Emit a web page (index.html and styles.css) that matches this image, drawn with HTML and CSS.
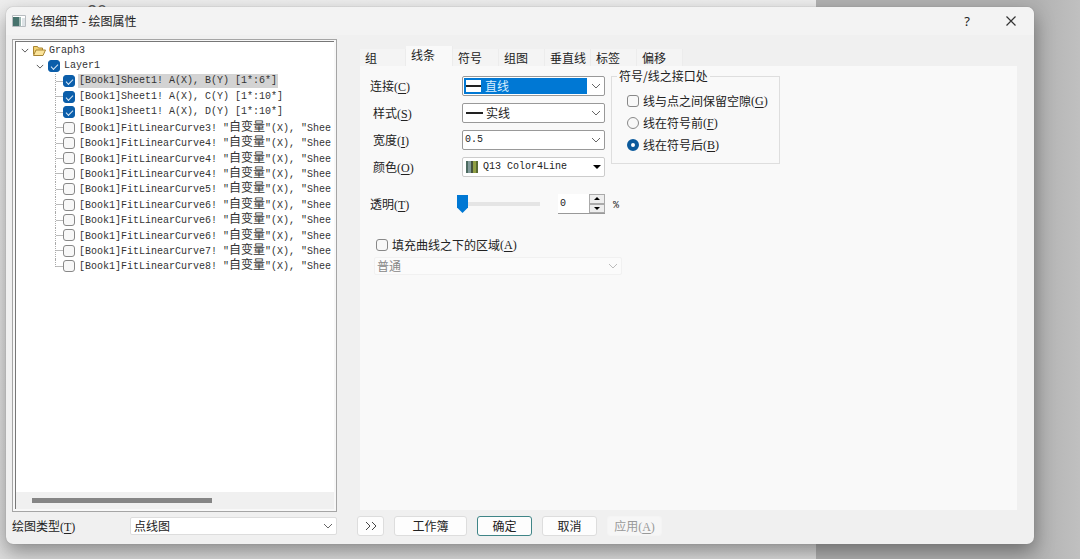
FILE: index.html
```
<!DOCTYPE html>
<html lang="zh-CN">
<head>
<meta charset="utf-8">
<title>绘图细节 - 绘图属性</title>
<link rel="stylesheet" href="styles.css">
</head>
<body>
<svg class="defs" width="0" height="0" aria-hidden="true">
  <symbol id="chev" viewBox="0 0 10 6"><path d="M1 1l4 4 4-4" fill="none" stroke="currentColor"/></symbol>
  <symbol id="up" viewBox="0 0 8 4"><path d="M0 4l4-4 4 4z" fill="currentColor"/></symbol>
  <symbol id="down" viewBox="0 0 8 4"><path d="M0 0l4 4 4-4z" fill="currentColor"/></symbol>
</svg>
<div class="backdrop" aria-hidden="true"><div class="page"><span>20</span></div></div>
<main class="dialog">
  <header class="titlebar">
    <svg width="14" height="12" viewBox="0 0 14 12"><path fill="#fff" stroke="#b8bcc0" d="M.5.5h13v11H.5z"/><path fill="#47736d" d="M1 2h6v9H1z"/><path fill="#9bb5b0" d="M7 2h2v9H7z"/><path fill="#dde3e6" d="M10 3h3v8h-3z"/></svg>
    <h1>绘图细节 - 绘图属性</h1>
    <button class="tb" aria-label="帮助">?</button>
    <button class="tb" aria-label="关闭"><svg width="10" height="10" viewBox="0 0 10 10"><path d="M.5.5l9 9M9.500.5l-9 9" stroke="#333" fill="none" stroke-width="1.2"/></svg></button>
  </header>
  <div class="body">
    <section class="tree">
      <div class="view">
        <ul class="rows">
          <li class="root"><svg class="arrow" width="8" height="5"><use href="#chev"/></svg><svg width="13" height="11" viewBox="0 0 13 11"><path d="M.5 9.500V1.500h4l1 1.500h4v2" fill="#f3d271" stroke="#a88432"/><path d="M.5 10.500L3 5h9.500l-2.500 5.500z" fill="#fbe49b" stroke="#a88432"/></svg><span class="l">Graph3</span></li>
          <li class="layer"><svg class="arrow" width="8" height="5"><use href="#chev"/></svg><label><input type="checkbox" checked><span class="l">Layer1</span></label></li>
          <li class="leaf"><label><input type="checkbox" checked><span class="l picked">[Book1]Sheet1! A(X), B(Y) [1*:6*]</span></label></li>
          <li class="leaf"><label><input type="checkbox" checked><span class="l">[Book1]Sheet1! A(X), C(Y) [1*:10*]</span></label></li>
          <li class="leaf"><label><input type="checkbox" checked><span class="l">[Book1]Sheet1! A(X), D(Y) [1*:10*]</span></label></li>
          <li class="leaf"><label><input type="checkbox"><span class="l">[Book1]FitLinearCurve3! "<b>自变量</b>"(X), "Shee</span></label></li>
          <li class="leaf"><label><input type="checkbox"><span class="l">[Book1]FitLinearCurve4! "<b>自变量</b>"(X), "Shee</span></label></li>
          <li class="leaf"><label><input type="checkbox"><span class="l">[Book1]FitLinearCurve4! "<b>自变量</b>"(X), "Shee</span></label></li>
          <li class="leaf"><label><input type="checkbox"><span class="l">[Book1]FitLinearCurve4! "<b>自变量</b>"(X), "Shee</span></label></li>
          <li class="leaf"><label><input type="checkbox"><span class="l">[Book1]FitLinearCurve5! "<b>自变量</b>"(X), "Shee</span></label></li>
          <li class="leaf"><label><input type="checkbox"><span class="l">[Book1]FitLinearCurve6! "<b>自变量</b>"(X), "Shee</span></label></li>
          <li class="leaf"><label><input type="checkbox"><span class="l">[Book1]FitLinearCurve6! "<b>自变量</b>"(X), "Shee</span></label></li>
          <li class="leaf"><label><input type="checkbox"><span class="l">[Book1]FitLinearCurve6! "<b>自变量</b>"(X), "Shee</span></label></li>
          <li class="leaf"><label><input type="checkbox"><span class="l">[Book1]FitLinearCurve7! "<b>自变量</b>"(X), "Shee</span></label></li>
          <li class="leaf"><label><input type="checkbox"><span class="l">[Book1]FitLinearCurve8! "<b>自变量</b>"(X), "Shee</span></label></li>
        </ul>
        <div class="scroll"><div class="thumb"></div></div>
      </div>
    </section>
    <section class="props">
      <nav class="tabs">
        <button>组</button><button class="on">线条</button><button>符号</button><button>组图</button><button>垂直线</button><button>标签</button><button>偏移</button>
      </nav>
      <div class="panel">
        <div class="cols">
          <div class="form">
            <label for="conn">连接<span class="key">(<u>C</u>)</span></label>
            <div class="sel focus"><select id="conn"><option>直线</option></select><i class="swatch"></i><svg class="chev" width="10" height="6"><use href="#chev"/></svg></div>
            <label class="in" for="style">样式<span class="key">(<u>S</u>)</span></label>
            <div class="sel lined"><select id="style"><option>实线</option></select><i class="swatch"></i><svg class="chev" width="10" height="6"><use href="#chev"/></svg></div>
            <label class="in" for="width">宽度<span class="key">(<u>I</u>)</span></label>
            <div class="sel mono"><select id="width"><option>0.5</option></select><svg class="chev" width="10" height="6"><use href="#chev"/></svg></div>
            <label class="in" for="color">颜色<span class="key">(<u>O</u>)</span></label>
            <div class="sel mono color"><select id="color"><option>Q13 Color4Line</option></select><i class="palette"></i><svg class="chev" width="8" height="4"><use href="#down"/></svg></div>
          </div>
          <fieldset>
            <legend>符号/线之接口处</legend>
            <label><input type="checkbox">线与点之间保留空隙<span class="key">(<u>G</u>)</span></label>
            <label><input type="radio" name="pos">线在符号前<span class="key">(<u>F</u>)</span></label>
            <label><input type="radio" name="pos" checked>线在符号后<span class="key">(<u>B</u>)</span></label>
          </fieldset>
        </div>
        <div class="trans">
          <label for="alpha">透明<span class="key">(<u>T</u>)</span></label>
          <input id="alpha" type="range" min="0" max="100" value="0">
          <div class="spin"><input type="text" value="0" aria-label="透明度"><div><button aria-label="增加"><svg width="6" height="3"><use href="#up"/></svg></button><button aria-label="减少"><svg width="6" height="3"><use href="#down"/></svg></button></div></div>
          <span class="l unit">%</span>
        </div>
        <label class="fill"><input type="checkbox">填充曲线之下的区域<span class="key">(<u>A</u>)</span></label>
        <div class="sel off"><select disabled aria-label="填充方式"><option>普通</option></select><svg class="chev" width="10" height="6"><use href="#chev"/></svg></div>
      </div>
    </section>
  </div>
  <footer>
    <div class="kind"><label for="kind">绘图类型<span class="key">(<u>T</u>)</span></label><div class="sel plain"><select id="kind"><option>点线图</option></select><svg class="chev" width="10" height="6"><use href="#chev"/></svg></div></div>
    <div class="actions">
      <button class="more" aria-label="展开"><svg width="12" height="10" viewBox="0 0 12 10"><path d="M1 1l4 4-4 4M7 1l4 4-4 4" fill="none" stroke="#444"/></svg></button>
      <button class="book">工作簿</button>
      <button class="ok">确定</button>
      <button>取消</button>
      <button disabled>应用<span class="key">(<u>A</u>)</span></button>
    </div>
  </footer>
</main>
</body>
</html>
```

FILE: styles.css
```
* { box-sizing: border-box; }
body {
  margin: 0;
  min-height: 100vh;
  display: flex;
  padding: 7px 46px 15px 6px;
  background: #c0c0c0;
  font: 12px/16px "Noto Sans CJK SC", sans-serif;
  color: #222;
  overflow: hidden;
}
button, select, input { font: inherit; color: inherit; margin: 0; padding: 0; }
.defs { position: absolute; }
.backdrop { position: absolute; inset: 0; background: linear-gradient(90deg, #b2b2b2 96%, #c0c0c0); }
.page { width: 816px; height: 100%; background: linear-gradient(#eee, #ddd); padding: 5px 87px; font: 18px/14px "Liberation Sans", sans-serif; color: #555; }
.dialog {
  position: relative;
  flex: 1;
  display: flex;
  flex-direction: column;
  background: #f0f0f0;
  border-radius: 7px;
  box-shadow: 0 0 1px #777, 0 8px 20px rgba(0, 0, 0, .38);
  padding: 0 17px 8px 6px;
}
.l { font: 10px/14px "Liberation Mono", monospace; white-space: pre; }
.key { font: 12px/14px "Liberation Serif", serif; }
u { text-underline-offset: 2px; }

.titlebar {
  display: flex;
  align-items: center;
  height: 28px;
  margin: 0 -17px 0 -6px;
  padding: 0 8px 0 6px;
  background: #f3f3f3;
  border-radius: 7px 7px 0 0;
}
.titlebar h1 { flex: 1; margin: 0 0 0 5px; font-size: 12px; line-height: 16px; font-weight: 400; }
.tb { width: 30px; height: 24px; margin-left: 14px; border: 0; background: none; font: 13px/16px "Noto Sans", sans-serif; }

.body { flex: 1; display: grid; grid-template-columns: 325px 1fr; gap: 23px; padding-top: 4px; }
.tree { border: 1px solid #a5a5a5; padding: 1px 2px 2px; background: #f8f8f8; min-width: 0; }
.view { height: 100%; display: flex; flex-direction: column; border: solid #777; border-width: 1px 0 0 1px; background: #fff; }
.rows { list-style: none; margin: 0; padding: 1px 0 0; flex: none; display: grid; grid-template-rows: repeat(15, minmax(0, 1fr)); height: 232px; color: #333; }
.rows li { display: flex; align-items: center; min-width: 0; white-space: nowrap; }
.rows label { display: flex; align-items: center; gap: 3px; height: 100%; }
.rows b { font: 12px/12px "Noto Sans CJK SC", sans-serif; }
.root { padding-left: 5px; gap: 4px; }
.root .l { margin-left: -2px; }
.layer { padding-left: 20px; gap: 4px; }
.rows .l { padding: 0 1px; }
.picked { background: #d3d3d3; }
.leaf { padding-left: 39px; }
.leaf label::before {
  content: "";
  width: 7px;
  align-self: stretch;
  margin-right: -3px;
  border-left: 1px dotted #aaa;
  background: linear-gradient(#bbb, #bbb) center / 100% 1px no-repeat;
}
.leaf:last-child label::before { margin-bottom: 7px; background-position: bottom; }
.scroll { margin-top: auto; height: 17px; background: #f0f0f0; padding: 6px 16px; }
.thumb { width: 63%; height: 5px; background: #858585; }

input[type=checkbox], input[type=radio] {
  appearance: none;
  flex: none;
  width: 12px;
  height: 12px;
  border: 1px solid #888;
  border-radius: 3px;
  background: #f8f8f8;
}
input[type=radio] { border-radius: 50%; }
input[type=checkbox]:checked { display: grid; place-items: center; background: #0b5eaa; border-color: #0b5eaa; }
input[type=checkbox]:checked::before { content: ""; width: 6px; height: 3px; border: solid #d8e8f6; border-width: 0 0 1px 1px; transform: rotate(-45deg); }
input[type=radio]:checked { border: 4px solid #0b5a9c; background: #fff; }

.props { display: flex; flex-direction: column; min-width: 0; padding-top: 6px; }
.tabs { display: flex; align-items: flex-end; height: 21px; }
.tabs button { height: 17px; width: 46px; border: 0; border-right: 1px solid #ececec; background: #f4f4f4; text-align: left; padding: 0 0 0 5px; white-space: nowrap; }
.tabs .on { height: 20px; width: 47px; background: #f9f9f9; padding-bottom: 2px; }
.panel { flex: 1; background: #f9f9f9; padding: 4px 10px; margin-bottom: 2px; }
.cols { display: flex; gap: 6px; align-items: flex-start; }
.form { display: grid; grid-template-columns: 92px 143px; grid-auto-rows: 20px; row-gap: 7px; align-items: center; padding-top: 6px; }
.in { padding-left: 3px; }

.sel { position: relative; height: 20px; border: 1px solid #999; border-radius: 2px; background: #fff; }
.sel select { appearance: none; display: block; width: 100%; height: 100%; border: 0; background: none; padding: 0 20px 0 23px; outline: 0; }
.mono select { font: 10px/14px "Liberation Mono", monospace; padding-left: 2px; }
.chev { position: absolute; right: 3px; top: 6px; color: #666; }
.focus { padding: 1px 17px 1px 1px; }
.focus select { background: #0078d4; color: #d9efff; padding: 0 0 0 21px; }
.swatch { position: absolute; left: 3px; top: 3px; width: 15px; height: 12px; background: linear-gradient(#222, #222) center / 100% 2px no-repeat #fff; }
.lined .swatch { width: 17px; }
.color { border-color: #ccc; }
.color select { padding-left: 20px; }
.color .chev { top: 7px; color: #000; }
.palette { position: absolute; left: 3px; top: 3px; width: 12px; height: 12px; background: linear-gradient(90deg, #4c6b60 2px, #829b9b 2px 5px, #46533d 5px 7px, #91a044 7px 10px, #596b32 10px); }

fieldset { width: 169px; min-width: 0; margin: 0; border: 1px solid #dedede; padding: 11px 14px 10px 15px; display: grid; gap: 6px; }
legend { padding: 0 2px; margin-left: -10px; white-space: nowrap; line-height: 12px; }
fieldset label, .fill { display: flex; align-items: center; gap: 4px; white-space: nowrap; }
fieldset .key, .fill .key { margin-left: -4px; }

.trans { display: flex; align-items: center; height: 20px; margin-top: 17px; }
.trans label { width: 87px; }
input[type=range] { appearance: none; width: 83px; height: 20px; background: none; }
input[type=range]::-webkit-slider-runnable-track { height: 4px; background: #e5e5e5; }
input[type=range]::-webkit-slider-thumb { appearance: none; width: 11px; height: 18px; margin-top: -7px; background: #0078d4; clip-path: polygon(0 0, 100% 0, 100% 70%, 50% 100%, 0 70%); }
.spin { display: flex; width: 47px; height: 20px; margin: 0 8px 0 18px; background: #fff; border-bottom: 1px solid #999; }
.spin input { flex: 1; min-width: 0; border: 0; background: none; padding-left: 2px; font: 10px/14px "Liberation Mono", monospace; }
.spin > div { display: grid; width: 16px; }
.spin button { display: grid; place-items: center; border: 1px solid #aaa; background: #eee; color: #000; }
.unit { padding-top: 4px; }
.fill { margin: 23px 0 4px 6px; }
.off { width: 248px; margin-left: 4px; height: 18px; border-color: #f1f1f1; color: #888; background: #fbfbfb; }
.off select { padding-left: 2px; opacity: 1; }
.off .chev { color: #bbb; top: 5px; }

footer { display: grid; grid-template-columns: 325px 1fr; gap: 20px; padding-top: 4px; }
.kind { display: grid; grid-template-columns: 118px 1fr; align-items: center; }
.plain { height: 18px; border-color: #ddd; }
.plain select { padding-left: 3px; }
.plain .chev { top: 5px; }
.actions { display: flex; gap: 10px; }
.actions button { width: 55px; height: 20px; border: 1px solid #ddd; border-radius: 3px; background: #fdfdfd; white-space: nowrap; line-height: 16px; }
.actions .more { width: 27px; display: grid; place-items: center; }
.actions .book { width: 73px; }
.actions .ok { border-color: #3f8587; }
.actions button:disabled { color: #999; background: #f6f6f6; border-color: #f4f4f4; }
```
